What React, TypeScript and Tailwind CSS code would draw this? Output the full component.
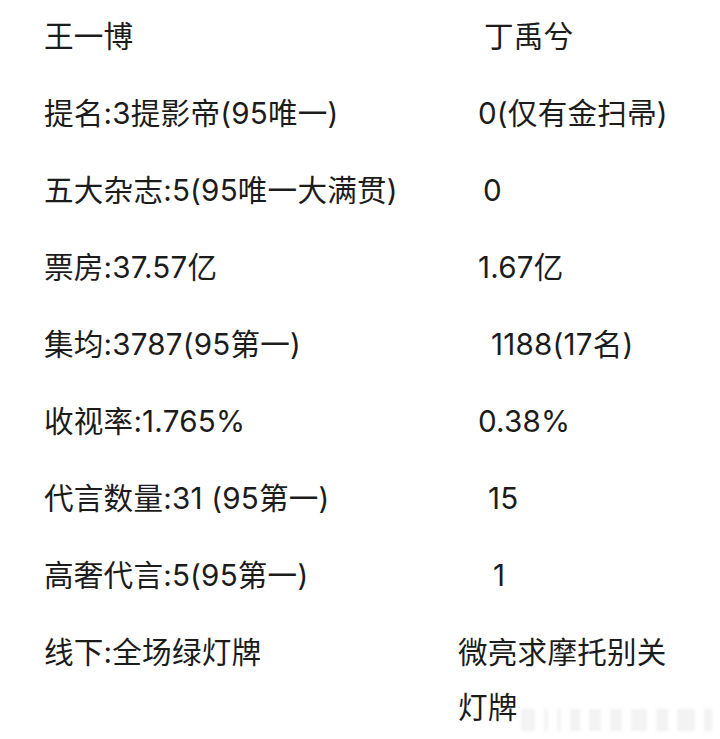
const rows: { left: string; right: string; pad: string }[] = [
  { left: '王一博', right: '丁禹兮', pad: 'pl-[6px]' },
  { left: '提名:3提影帝(95唯一)', right: '0(仅有金扫帚)', pad: 'pl-[0px]' },
  { left: '五大杂志:5(95唯一大满贯)', right: '0', pad: 'pl-[5px]' },
  { left: '票房:37.57亿', right: '1.67亿', pad: 'pl-[0px]' },
  { left: '集均:3787(95第一)', right: '1188(17名)', pad: 'pl-[13px]' },
  { left: '收视率:1.765%', right: '0.38%', pad: 'pl-[0px]' },
  { left: '代言数量:31 (95第一)', right: '15', pad: 'pl-[10px]' },
  { left: '高奢代言:5(95第一)', right: '1', pad: 'pl-[15px]' },
]

const marks = ['w-[14px]', 'w-[4px]', 'w-[4px]', 'w-[10px]', 'w-[12px]', 'w-[12px]', 'w-[16px]', 'w-[12px]', 'w-[18px]', 'w-[8px]']

export default function App() {
  return (
    <div
      className="relative w-[720px] h-[739px] overflow-hidden bg-white text-[#1c1c1c]"
      style={{ fontFamily: 'Inter, "Noto Sans CJK SC", sans-serif' }}
    >
      <div className="flex flex-col gap-[22px] pt-[9px] pl-[44px] text-[29.6px] leading-[55px] tracking-[0.2px]">
        {rows.map(r => (
          <div key={r.left} className="grid grid-cols-[434px_1fr]">
            <div>{r.left}</div>
            <div className={r.pad}>{r.right}</div>
          </div>
        ))}
        <div className="grid grid-cols-[414px_220px]">
          <div>线下:全场绿灯牌</div>
          <div>微亮求摩托别关灯牌</div>
        </div>
      </div>

      {/* faint watermark */}
      <div className="absolute right-[8px] bottom-[8px] flex items-end gap-[9px] blur-[1.5px]">
        {marks.map((w, i) => (
          <span key={i} className={`${w} h-[22px] bg-[#f3f3f3]`} />
        ))}
      </div>
    </div>
  )
}
